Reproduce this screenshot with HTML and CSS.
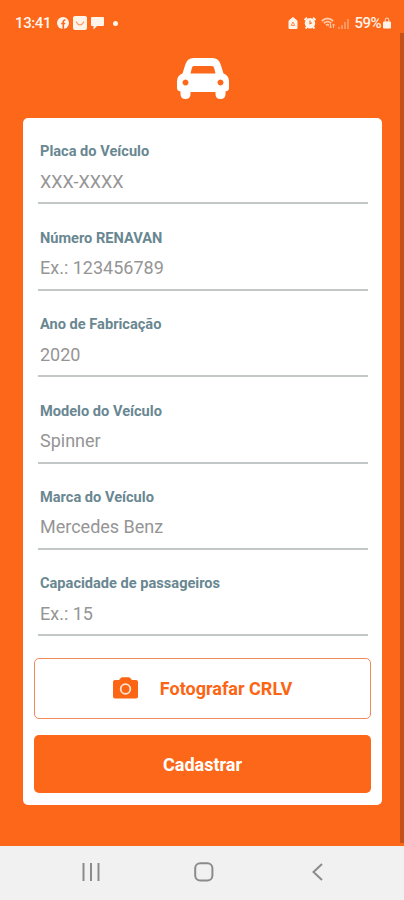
FILE: index.html
```html
<!DOCTYPE html>
<html lang="pt-BR">
  <head>
    <meta charset="UTF-8" />
    <meta name="viewport" content="width=device-width, initial-scale=1.0" />
    <title>Cadastro de Veículo</title>
    <link rel="stylesheet" href="styles.css">
  </head>
  <body>
    <div class="tela">
      <div class="status">
        <span class="hora">13:41</span>
        <svg class="st-face" viewBox="0 0 12 12" width="12" height="12">
          <circle cx="6" cy="6" r="6" fill="#fff4ea" />
          <path d="M6.3 12V5c0-1.300.6-2 2.100-2M4.200 6.500h4" fill="none" stroke="#fd671a" stroke-width="1.600" />
        </svg>
        <svg class="st-box" viewBox="0 0 14 14" width="14" height="14">
          <rect width="14" height="14" rx="2" fill="#fff4ea" />
          <path d="M3 5.500l1.500 2.200Q7 10 9.500 7.700L11 5.500" fill="none" stroke="#fb9a68" stroke-width="1.200" />
        </svg>
        <svg class="st-chat" viewBox="0 0 13 13" width="13" height="13">
          <path d="M1 0h11a1 1 0 0 1 1 1v7a1 1 0 0 1-1 1H6l-3.500 3.500V9H1a1 1 0 0 1-1-1V1a1 1 0 0 1 1-1z" fill="#fff4ea" />
        </svg>
        <span class="ponto"></span>
        <div class="status-dir">
          <svg class="st-casa" viewBox="0 0 10 12" width="10" height="12">
            <path d="M5 .5l4 3.200V11.500H1V3.700z" fill="#fff4ea" stroke="#fff4ea" stroke-linejoin="round" />
            <path d="M3.200 8.500L5 5l1.800 3.500M3.500 8.500h3" fill="none" stroke="#fd8a50" />
          </svg>
          <svg class="st-alarme" viewBox="0 0 12 12" width="12" height="12">
            <path d="M.5 3L3 .7M11.500 3L9 .7M1.500 11.500L3 10M10.500 11.500L9 10" stroke="#fff4ea" stroke-width="1.800" />
            <circle cx="6" cy="6.200" r="5.200" fill="#fff4ea" />
            <path d="M6 3.500v3.200l2-1" fill="none" stroke="#fd671a" stroke-width="1.100" />
          </svg>
          <svg class="st-wifi" viewBox="0 0 15 12" width="15" height="12">
            <path d="M.8 4Q6.500-1 12.200 4M2.800 6.200Q6.500 3 10.200 6.200M5 8.300Q6.500 7 8 8.300" fill="none" stroke="#ffc7a4" stroke-width="1.800" />
            <path d="M9.500 11V6.500M8 9.500L9.500 11L11 9.500M12.500 11V7M11 8.500L12.500 7L14 8.500" fill="none" stroke="#ffc7a4" />
          </svg>
          <svg class="st-sinal" viewBox="0 0 11 11" width="11" height="11">
            <path d="M1 11V9M4 11V7M7 11V4M10 11V1" stroke="#ff9b66" stroke-width="1.800" />
          </svg>
          <span class="bateria">59%</span>
          <svg class="st-trava" viewBox="0 0 8 12" width="8" height="12">
            <path d="M2.300 5V2.800a1.700 1.700 0 0 1 3.400 0V5" fill="none" stroke="#ffc7a4" stroke-width="1.200" />
            <rect y="4.500" width="8" height="7" rx="1" fill="#fff4ea" />
          </svg>
        </div>
      </div>

      <svg class="carro" viewBox="0 0 54 44" width="54" height="44">
        <path fill="#fff" fill-rule="evenodd" d="M17.500 1H36.500Q42.500 1 44.500 7L47.500 16.500Q53 18.500 53 24V31Q53 34 49.500 34.500V37Q49.500 42 44.500 42Q39.500 42 39.500 37V35H14.500V37Q14.500 42 9.500 42Q4.500 42 4.500 37V34.500Q1 34 1 31V24Q1 18.500 6.500 16.500L9.500 7Q11.500 1 17.500 1ZM18 9Q16.500 9 16 10.500L14.500 16.500H39.500L38 10.500Q37.500 9 36 9ZM9.500 22.500a3 3 0 1 0 .01 0ZM44.500 22.500a3 3 0 1 0 .01 0Z" />
      </svg>

      <form class="card">
        <label class="campo">
          <span class="rotulo">Placa do Veículo</span>
          <input type="text" placeholder="XXX-XXXX" />
        </label>
        <label class="campo">
          <span class="rotulo">Número RENAVAN</span>
          <input type="text" placeholder="Ex.: 123456789" />
        </label>
        <label class="campo">
          <span class="rotulo">Ano de Fabricação</span>
          <input type="text" placeholder="2020" />
        </label>
        <label class="campo">
          <span class="rotulo">Modelo do Veículo</span>
          <input type="text" placeholder="Spinner" />
        </label>
        <label class="campo">
          <span class="rotulo">Marca do Veículo</span>
          <input type="text" placeholder="Mercedes Benz" />
        </label>
        <label class="campo">
          <span class="rotulo">Capacidade de passageiros</span>
          <input type="text" placeholder="Ex.: 15" />
        </label>
        <button type="button" class="btn btn-foto">
          <svg viewBox="0 0 25 22" width="25" height="22">
            <path fill="#fb6514" d="M2 3H6L8 .8Q8.500.3 9.200.3H15.800Q16.500.3 17 .8L19 3H23Q25 3 25 5V19.500Q25 21.500 23 21.500H2Q0 21.500 0 19.500V5Q0 3 2 3Z" />
            <circle cx="12.500" cy="12" r="4.800" fill="none" stroke="#ffe3cf" stroke-width="1.800" />
          </svg>
          <span>Fotografar CRLV</span>
        </button>
        <button type="button" class="btn btn-cadastrar">Cadastrar</button>
      </form>
      <div class="rolagem"></div>
    </div>

    <div class="nav">
      <svg viewBox="0 0 18 18" width="18" height="18">
        <path d="M1.500 0V18M9 0V18M16.500 0V18" stroke="#8b8b8b" stroke-width="2" />
      </svg>
      <svg viewBox="0 0 20 20" width="20" height="20">
        <rect x="1.200" y="1.200" width="17.200" height="17.200" rx="5" fill="none" stroke="#8b8b8b" stroke-width="2" />
      </svg>
      <svg viewBox="0 0 11 18" width="11" height="18">
        <path d="M10 1L1.500 9L10 17" fill="none" stroke="#8b8b8b" stroke-width="2" />
      </svg>
    </div>
  </body>
</html>
```

FILE: styles.css
```css
body {
  margin: 0;
  font-family: Roboto, sans-serif;
  background-color: #f1f1f1;
}

.tela {
  position: relative;
  box-sizing: border-box;
  height: 846px;
  background-color: #fd671a;
}

.status {
  display: flex;
  align-items: center;
  box-sizing: border-box;
  height: 57px;
  padding: 0 13px 11px 15px;
  color: #fff4ea;
}

.hora {
  width: 42px;
  font-size: 15px;
  font-weight: 500;
  letter-spacing: -0.4px;
}

.st-box {
  margin-left: 4px;
}

.st-chat {
  margin-left: 4px;
}

.ponto {
  width: 5px;
  height: 5px;
  margin-left: 9px;
  border-radius: 50%;
  background-color: #fff4ea;
}

.status-dir {
  display: flex;
  align-items: center;
  margin-left: auto;
}

.st-alarme {
  margin-left: 6px;
}

.st-wifi {
  margin-left: 5px;
}

.st-sinal {
  margin-left: 2px;
}

.bateria {
  margin-left: 5px;
  font-size: 15px;
  font-weight: 500;
  letter-spacing: -0.5px;
}

.st-trava {
  margin-left: 2px;
}

.carro {
  display: block;
  margin: 0 0 17px 176px;
}

.card {
  display: flex;
  flex-direction: column;
  box-sizing: border-box;
  width: 359px;
  height: 687px;
  margin-left: 23px;
  border-radius: 5px;
  padding: 0 11px;
  background-color: #fff;
}

.campo {
  display: block;
  box-sizing: border-box;
  height: 86.4px;
  margin: 0 3.5px;
  padding-top: 24.4px;
}

.rotulo {
  display: block;
  height: 18px;
  padding-left: 2.5px;
  font-size: 14.6px;
  line-height: 18px;
  font-weight: 700;
  color: #698791;
}

.campo input {
  display: block;
  box-sizing: border-box;
  width: 100%;
  height: 44px;
  padding: 0 2.5px;
  border: 0;
  border-bottom: 2px solid #c3c7c8;
  outline: 0;
  background: none;
  font-family: inherit;
  font-size: 18px;
}

.campo input::placeholder {
  color: #959595;
  opacity: 1;
}

.btn {
  display: flex;
  align-items: center;
  justify-content: center;
  box-sizing: border-box;
  border-radius: 5px;
  font-family: inherit;
  font-size: 18px;
  font-weight: 700;
}

.btn-foto {
  gap: 22px;
  height: 61px;
  margin-top: 21.6px;
  border: 1px solid #f18a5b;
  background-color: #fff;
  color: #fb6514;
}

.btn-cadastrar {
  height: 58px;
  margin-top: 16px;
  padding-top: 3px;
  border: 0;
  background-color: #fd671a;
  color: #fff;
}

/* barra de rolagem da tela */
.rolagem {
  position: absolute;
  top: 33px;
  right: 0;
  width: 4px;
  height: 810px;
  background-color: #c4501a;
}

.nav {
  display: flex;
  align-items: center;
  justify-content: space-between;
  box-sizing: border-box;
  height: 54px;
  padding: 0 81px 2px 82px;
}

.nav svg:nth-child(2) {
  margin-right: 4px;
}
```
